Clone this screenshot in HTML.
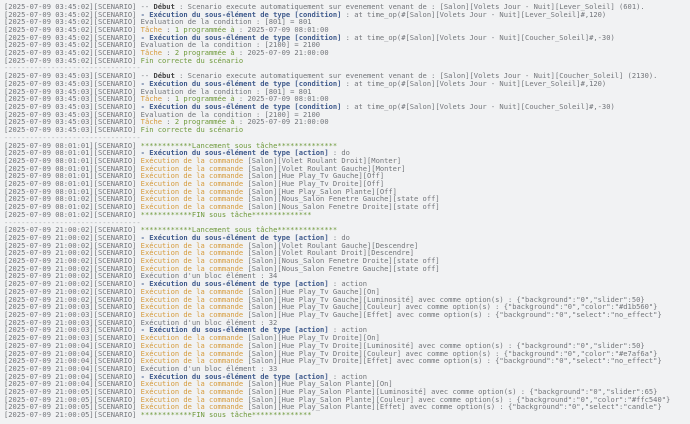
<!DOCTYPE html>
<html><head><meta charset="utf-8"><style>
html,body{margin:0;padding:0;background:#f1f2f3;width:690px;height:424px;overflow:hidden}
pre{position:absolute;left:4px;top:-4.85px;margin:0;font-family:"DejaVu Sans Mono","Liberation Mono",monospace;font-size:7.1px;line-height:7.7px;color:#72757a;white-space:pre}
.b{color:#3f5a8c;font-weight:bold}
.o{color:#d59b3c}
.g{color:#6f9a3c}
.d{color:#444;font-weight:bold}
.s{color:#a8abae}
</style></head><body><pre><span class="s">--------------------------------</span>
[2025-07-09 03:45:02][SCENARIO] -- <span class="d">Début</span> : Scenario execute automatiquement sur evenement venant de : [Salon][Volets Jour - Nuit][Lever_Soleil] (601).
[2025-07-09 03:45:02][SCENARIO] <span class="b">- Exécution du sous-élément de type [condition]</span> : at time_op(#[Salon][Volets Jour - Nuit][Lever_Soleil]#,120)
[2025-07-09 03:45:02][SCENARIO] Evaluation de la condition : [801] = 801
[2025-07-09 03:45:02][SCENARIO] <span class="o">Tâche</span> : <span class="g">1 programmée à</span> : 2025-07-09 08:01:00
[2025-07-09 03:45:02][SCENARIO] <span class="b">- Exécution du sous-élément de type [condition]</span> : at time_op(#[Salon][Volets Jour - Nuit][Coucher_Soleil]#,-30)
[2025-07-09 03:45:02][SCENARIO] Evaluation de la condition : [2100] = 2100
[2025-07-09 03:45:02][SCENARIO] <span class="o">Tâche</span> : <span class="g">2 programmée à</span> : 2025-07-09 21:00:00
[2025-07-09 03:45:02][SCENARIO] <span class="g">Fin correcte du scénario</span>
<span class="s">--------------------------------</span>
[2025-07-09 03:45:03][SCENARIO] -- <span class="d">Début</span> : Scenario execute automatiquement sur evenement venant de : [Salon][Volets Jour - Nuit][Coucher_Soleil] (2130).
[2025-07-09 03:45:03][SCENARIO] <span class="b">- Exécution du sous-élément de type [condition]</span> : at time_op(#[Salon][Volets Jour - Nuit][Lever_Soleil]#,120)
[2025-07-09 03:45:03][SCENARIO] Evaluation de la condition : [801] = 801
[2025-07-09 03:45:03][SCENARIO] <span class="o">Tâche</span> : <span class="g">1 programmée à</span> : 2025-07-09 08:01:00
[2025-07-09 03:45:03][SCENARIO] <span class="b">- Exécution du sous-élément de type [condition]</span> : at time_op(#[Salon][Volets Jour - Nuit][Coucher_Soleil]#,-30)
[2025-07-09 03:45:03][SCENARIO] Evaluation de la condition : [2100] = 2100
[2025-07-09 03:45:03][SCENARIO] <span class="o">Tâche</span> : <span class="g">2 programmée à</span> : 2025-07-09 21:00:00
[2025-07-09 03:45:03][SCENARIO] <span class="g">Fin correcte du scénario</span>
<span class="s">--------------------------------</span>
[2025-07-09 08:01:01][SCENARIO] <span class="g">************Lancement sous tâche**************</span>
[2025-07-09 08:01:01][SCENARIO] <span class="b">- Exécution du sous-élément de type [action]</span> : do
[2025-07-09 08:01:01][SCENARIO] <span class="o">Exécution de la commande</span> [Salon][Volet Roulant Droit][Monter]
[2025-07-09 08:01:01][SCENARIO] <span class="o">Exécution de la commande</span> [Salon][Volet Roulant Gauche][Monter]
[2025-07-09 08:01:01][SCENARIO] <span class="o">Exécution de la commande</span> [Salon][Hue Play_Tv Gauche][Off]
[2025-07-09 08:01:01][SCENARIO] <span class="o">Exécution de la commande</span> [Salon][Hue Play_Tv Droite][Off]
[2025-07-09 08:01:01][SCENARIO] <span class="o">Exécution de la commande</span> [Salon][Hue Play_Salon Plante][Off]
[2025-07-09 08:01:02][SCENARIO] <span class="o">Exécution de la commande</span> [Salon][Nous_Salon Fenetre Gauche][state off]
[2025-07-09 08:01:02][SCENARIO] <span class="o">Exécution de la commande</span> [Salon][Nous_Salon Fenetre Droite][state off]
[2025-07-09 08:01:02][SCENARIO] <span class="g">************FIN sous tâche**************</span>
<span class="s">--------------------------------</span>
[2025-07-09 21:00:02][SCENARIO] <span class="g">************Lancement sous tâche**************</span>
[2025-07-09 21:00:02][SCENARIO] <span class="b">- Exécution du sous-élément de type [action]</span> : do
[2025-07-09 21:00:02][SCENARIO] <span class="o">Exécution de la commande</span> [Salon][Volet Roulant Gauche][Descendre]
[2025-07-09 21:00:02][SCENARIO] <span class="o">Exécution de la commande</span> [Salon][Volet Roulant Droit][Descendre]
[2025-07-09 21:00:02][SCENARIO] <span class="o">Exécution de la commande</span> [Salon][Nous_Salon Fenetre Droite][state off]
[2025-07-09 21:00:02][SCENARIO] <span class="o">Exécution de la commande</span> [Salon][Nous_Salon Fenetre Gauche][state off]
[2025-07-09 21:00:02][SCENARIO] Exécution d'un bloc élément : 34
[2025-07-09 21:00:02][SCENARIO] <span class="b">- Exécution du sous-élément de type [action]</span> : action
[2025-07-09 21:00:02][SCENARIO] <span class="o">Exécution de la commande</span> [Salon][Hue Play_Tv Gauche][On]
[2025-07-09 21:00:02][SCENARIO] <span class="o">Exécution de la commande</span> [Salon][Hue Play_Tv Gauche][Luminosité] avec comme option(s) : {"background":"0","slider":50}
[2025-07-09 21:00:03][SCENARIO] <span class="o">Exécution de la commande</span> [Salon][Hue Play_Tv Gauche][Couleur] avec comme option(s) : {"background":"0","color":"#d1b560"}
[2025-07-09 21:00:03][SCENARIO] <span class="o">Exécution de la commande</span> [Salon][Hue Play_Tv Gauche][Effet] avec comme option(s) : {"background":"0","select":"no_effect"}
[2025-07-09 21:00:03][SCENARIO] Exécution d'un bloc élément : 32
[2025-07-09 21:00:03][SCENARIO] <span class="b">- Exécution du sous-élément de type [action]</span> : action
[2025-07-09 21:00:03][SCENARIO] <span class="o">Exécution de la commande</span> [Salon][Hue Play_Tv Droite][On]
[2025-07-09 21:00:04][SCENARIO] <span class="o">Exécution de la commande</span> [Salon][Hue Play_Tv Droite][Luminosité] avec comme option(s) : {"background":"0","slider":50}
[2025-07-09 21:00:04][SCENARIO] <span class="o">Exécution de la commande</span> [Salon][Hue Play_Tv Droite][Couleur] avec comme option(s) : {"background":"0","color":"#e7af6a"}
[2025-07-09 21:00:04][SCENARIO] <span class="o">Exécution de la commande</span> [Salon][Hue Play_Tv Droite][Effet] avec comme option(s) : {"background":"0","select":"no_effect"}
[2025-07-09 21:00:04][SCENARIO] Exécution d'un bloc élément : 33
[2025-07-09 21:00:04][SCENARIO] <span class="b">- Exécution du sous-élément de type [action]</span> : action
[2025-07-09 21:00:04][SCENARIO] <span class="o">Exécution de la commande</span> [Salon][Hue Play_Salon Plante][On]
[2025-07-09 21:00:05][SCENARIO] <span class="o">Exécution de la commande</span> [Salon][Hue Play_Salon Plante][Luminosité] avec comme option(s) : {"background":"0","slider":65}
[2025-07-09 21:00:05][SCENARIO] <span class="o">Exécution de la commande</span> [Salon][Hue Play_Salon Plante][Couleur] avec comme option(s) : {"background":"0","color":"#ffc540"}
[2025-07-09 21:00:05][SCENARIO] <span class="o">Exécution de la commande</span> [Salon][Hue Play_Salon Plante][Effet] avec comme option(s) : {"background":"0","select":"candle"}
[2025-07-09 21:00:05][SCENARIO] <span class="g">************FIN sous tâche**************</span>
</pre></body></html>
